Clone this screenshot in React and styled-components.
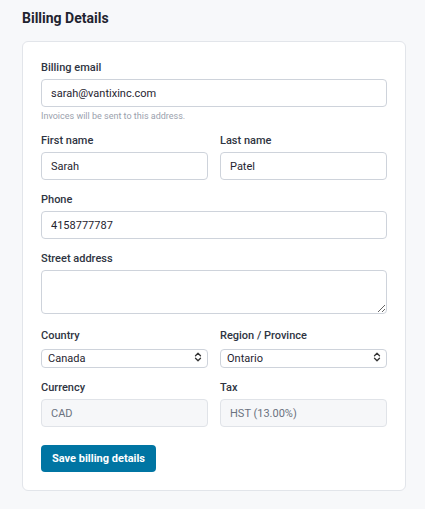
import React, { useState } from 'react';
import styled, { createGlobalStyle } from 'styled-components';

const GlobalStyle = createGlobalStyle`
  * { box-sizing: border-box; }
  body {
    margin: 0;
    background: #f7f8fa;
    font-family: Roboto, "Liberation Sans", sans-serif;
    color: #1f2937;
  }
`

export default function App() {
  const [email, setEmail] = useState("sarah@vantixinc.com")
  const [firstName, setFirstName] = useState("Sarah")
  const [lastName, setLastName] = useState("Patel")
  const [phone, setPhone] = useState("4158777787")
  const [street, setStreet] = useState("")
  const [country, setCountry] = useState("Canada")
  const [region, setRegion] = useState("Ontario")

  return (
    <Page>
      <GlobalStyle />
      <Title>Billing Details</Title>

      <Card onSubmit={e => e.preventDefault()}>
        <Field>
          <Label>Billing email</Label>
          <Input value={email} onChange={e => setEmail(e.target.value)} />
          <Hint>Invoices will be sent to this address.</Hint>
        </Field>

        <Row>
          <Field>
            <Label>First name</Label>
            <Input value={firstName} onChange={e => setFirstName(e.target.value)} />
          </Field>
          <Field>
            <Label>Last name</Label>
            <Input value={lastName} onChange={e => setLastName(e.target.value)} />
          </Field>
        </Row>

        <Field>
          <Label>Phone</Label>
          <Input value={phone} onChange={e => setPhone(e.target.value)} />
        </Field>

        <Field>
          <Label>Street address</Label>
          <TextArea value={street} onChange={e => setStreet(e.target.value)} />
        </Field>

        <Row>
          <Field>
            <Label>Country</Label>
            <SelectWrap>
              <Select value={country} onChange={e => setCountry(e.target.value)}>
                <option>Canada</option>
                <option>United States</option>
              </Select>
              <Chevrons />
            </SelectWrap>
          </Field>
          <Field>
            <Label>Region / Province</Label>
            <SelectWrap>
              <Select value={region} onChange={e => setRegion(e.target.value)}>
                <option>Ontario</option>
                <option>Quebec</option>
                <option>British Columbia</option>
              </Select>
              <Chevrons />
            </SelectWrap>
          </Field>
        </Row>

        <Row>
          <Field>
            <Label>Currency</Label>
            <Input value="CAD" disabled readOnly />
          </Field>
          <Field>
            <Label>Tax</Label>
            <Input value="HST (13.00%)" disabled readOnly />
          </Field>
        </Row>

        <Actions>
          <SaveButton type="submit">Save billing details</SaveButton>
        </Actions>
      </Card>
    </Page>
  )
}

function Chevrons() {
  return (
    <ChevronIcon width="8" height="10" viewBox="0 0 8 10" fill="none">
      <path d="M1.5 3.8 L4 1.3 L6.5 3.8" stroke="#333" strokeWidth="1.3" strokeLinecap="round" strokeLinejoin="round" />
      <path d="M1.5 6.2 L4 8.7 L6.5 6.2" stroke="#333" strokeWidth="1.3" strokeLinecap="round" strokeLinejoin="round" />
    </ChevronIcon>
  )
}

const Page = styled.div`
  padding: 8px 19px 19px 22px;
`

const Title = styled.h2`
  margin: 0 0 13px;
  font-size: 14px;
  line-height: 20px;
  font-weight: 700;
  color: #1f2430;
`

const Card = styled.form`
  display: flex;
  flex-direction: column;
  gap: 12px;
  background: #ffffff;
  border: 1px solid #e2e5ea;
  border-radius: 6px;
  padding: 18px 18px 18px;
`

const Row = styled.div`
  display: grid;
  grid-template-columns: 1fr 1fr;
  gap: 12px;
`

const Field = styled.div`
  display: flex;
  flex-direction: column;
  min-width: 0;
`

const Label = styled.label`
  font-size: 11px;
  line-height: 15px;
  font-weight: 500;
  color: #2f3542;
  margin-bottom: 4px;
`

const Input = styled.input`
  height: 28px;
  width: 100%;
  padding: 0 9px;
  border: 1px solid #ced3db;
  border-radius: 4px;
  background: #ffffff;
  font-family: inherit;
  font-size: 11px;
  color: #1f2430;
  outline: none;

  &:disabled {
    background: #f6f7f9;
    border-color: #e0e3e8;
    color: #6b7280;
  }
`

const Hint = styled.span`
  margin-top: 4px;
  font-size: 9px;
  line-height: 10px;
  color: #9aa1ad;
`

const TextArea = styled.textarea`
  height: 44px;
  width: 100%;
  margin-bottom: 2px;
  padding: 6px 9px;
  border: 1px solid #ced3db;
  border-radius: 4px;
  font-family: inherit;
  font-size: 11px;
  resize: vertical;
  outline: none;
`

const SelectWrap = styled.div`
  position: relative;
`

const Select = styled.select`
  appearance: none;
  width: 100%;
  height: 19px;
  padding: 0 18px 0 6px;
  border: 1px solid #ced3db;
  border-radius: 4px;
  background: #ffffff;
  font-family: inherit;
  font-size: 11px;
  color: #1f2430;
  outline: none;
`

const ChevronIcon = styled.svg`
  position: absolute;
  right: 6px;
  top: 5px;
  pointer-events: none;
`

const Actions = styled.div`
  display: flex;
  margin-top: 6px;
`

const SaveButton = styled.button`
  height: 27px;
  padding: 0 11px;
  border: none;
  border-radius: 4px;
  background: #0075a3;
  color: #ffffff;
  font-family: inherit;
  font-size: 11px;
  font-weight: 700;
  cursor: pointer;
`
